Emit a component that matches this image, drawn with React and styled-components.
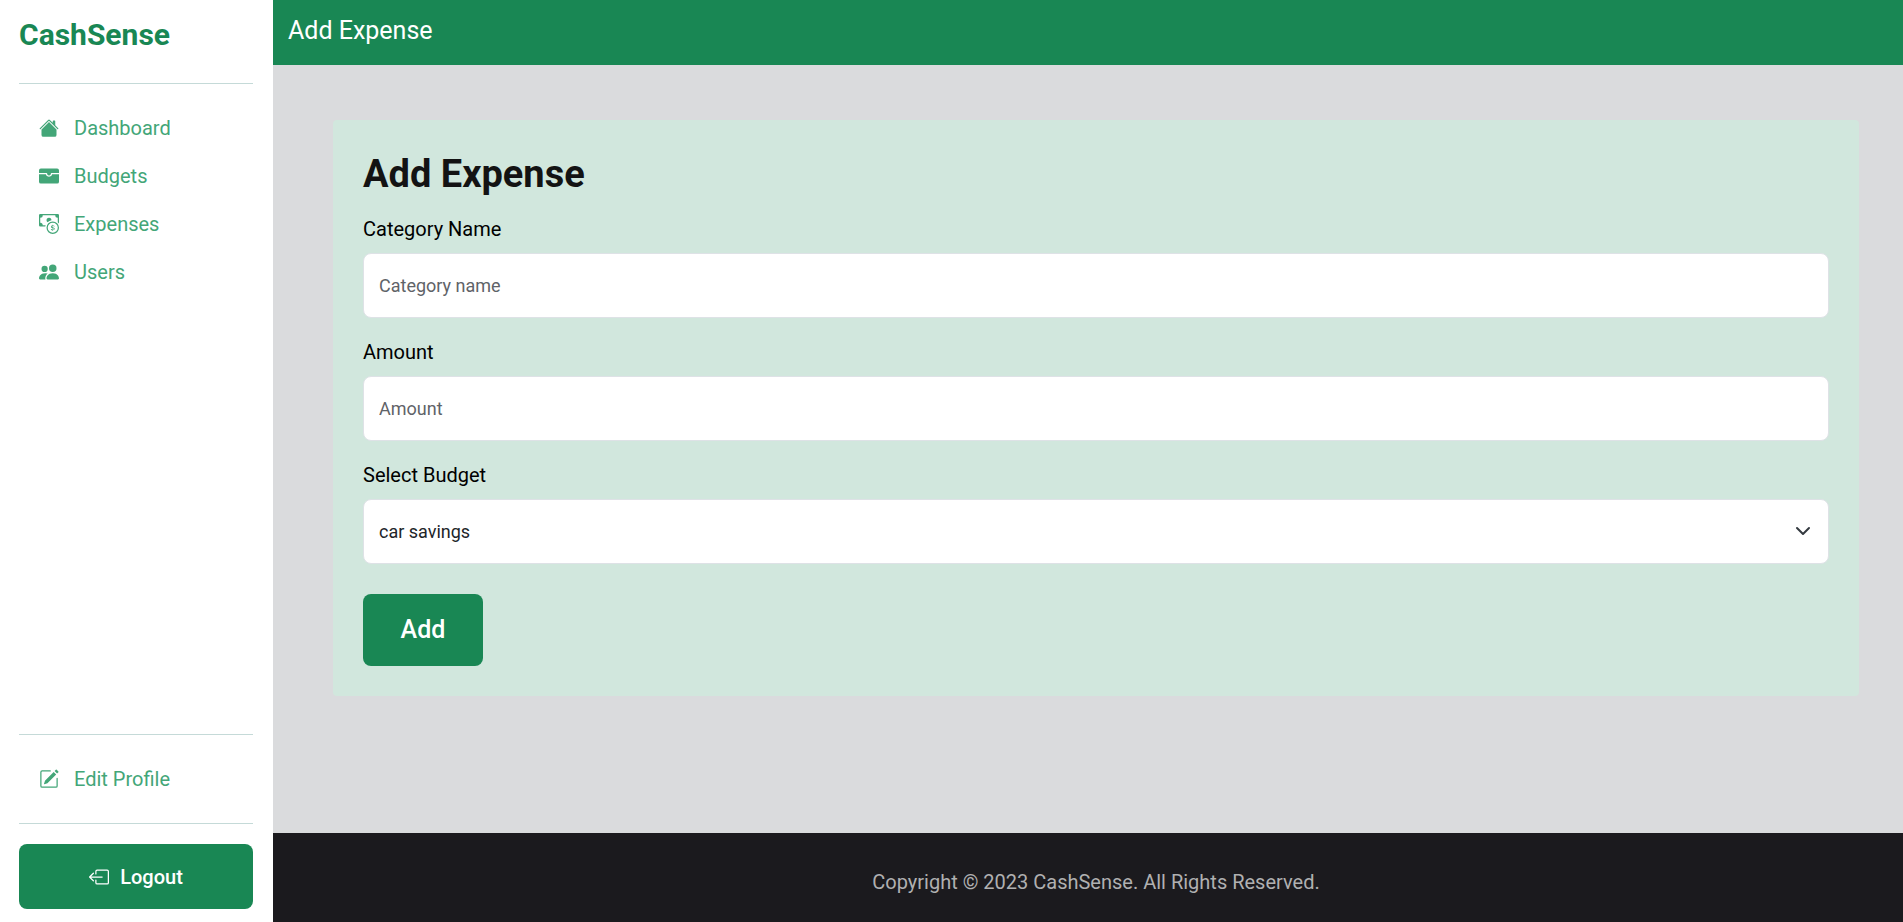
import React from "react";
import styled, { createGlobalStyle } from "styled-components";
import {
  BsHouseFill,
  BsWalletFill,
  BsCashCoin,
  BsPeopleFill,
  BsPencilSquare,
  BsBoxArrowLeft,
} from "react-icons/bs";

const GlobalStyle = createGlobalStyle`
  *, *::before, *::after { box-sizing: border-box; }
  body {
    margin: 0;
    background: #dadbdd;
    color: #131313;
    font-family: Roboto, "Liberation Sans", sans-serif;
    font-size: 20px;
    line-height: 30px;
  }
  button, input, select { font: inherit; }
`;

const Layout = styled.div`
  display: flex;
  min-height: 100vh;
`;

const Sidebar = styled.aside`
  display: flex;
  flex-direction: column;
  flex: 0 0 273px;
  padding: 17px 20px 13px 19px;
  background: #fff;
`;

const Brand = styled.a`
  color: #198754;
  font-size: 30px;
  font-weight: 700;
  line-height: 36px;
  text-decoration: none;
`;

const Divider = styled.hr`
  width: 100%;
  margin: 0;
  border: 0;
  border-top: 1px solid #c5dad8;
`;

const BrandDivider = styled(Divider)`
  margin-top: 30px;
`;

const NavList = styled.ul`
  flex: ${(p) => (p.$grow ? "1 0 auto" : "0 0 auto")};
  margin: 0;
  padding: 20px;
  list-style: none;
`;

const NavLink = styled.a`
  display: flex;
  align-items: center;
  gap: 15px;
  height: 48px;
  color: #43a678;
  text-decoration: none;
`;

const LogoutButton = styled.button`
  display: flex;
  align-items: center;
  justify-content: center;
  gap: 11px;
  width: 100%;
  height: 65px;
  margin-top: 20px;
  border: 0;
  border-radius: 8px;
  background: #198754;
  color: #fff;
  font-weight: 500;
`;

const Content = styled.div`
  display: flex;
  flex: 1;
  flex-direction: column;
  min-width: 0;
`;

const TopBar = styled.header`
  height: 65px;
  padding: 12px 15px;
  background: #198754;
  color: #fff;
  font-size: 25px;
  line-height: 38px;
`;

const Main = styled.main`
  flex: 1;
  padding: 55px 44px 55px 60px;
`;

const Card = styled.form`
  padding: 30px;
  border-radius: 4px;
  background: #d1e7dd;
`;

const Title = styled.h1`
  margin: 0 0 16px;
  font-size: 38px;
  font-weight: 700;
  line-height: 48px;
`;

const Field = styled.div`
  margin-bottom: 19px;
`;

const Label = styled.label`
  display: block;
  margin-bottom: 9px;
  color: #000;
`;

const Control = styled.input`
  display: block;
  width: 100%;
  height: 65px;
  padding: 0 15px;
  border: 1px solid #dee2e6;
  border-radius: 8px;
  background: #fff;
  color: #212529;
  font-size: 18px;
  appearance: none;

  &::placeholder {
    color: #5f6368;
    opacity: 1;
  }
`;

const SelectWrap = styled.div`
  position: relative;
`;

const SelectArrow = styled.svg`
  position: absolute;
  top: 24px;
  right: 18px;
  width: 16px;
  height: 16px;
  pointer-events: none;
  fill: none;
  stroke: #343a40;
  stroke-width: 2;
  stroke-linecap: round;
  stroke-linejoin: round;
`;

const AddButton = styled.button`
  display: block;
  width: 120px;
  height: 72px;
  margin-top: 30px;
  border: 0;
  border-radius: 8px;
  background: #198754;
  color: #fff;
  font-size: 25px;
  font-weight: 500;
`;

const Footer = styled.footer`
  padding: 34px 44px 25px 60px;
  background: #1b1a1e;
  color: #b0b0b1;
  text-align: center;
`;

const links = [
  { label: "Dashboard", Icon: BsHouseFill },
  { label: "Budgets", Icon: BsWalletFill },
  { label: "Expenses", Icon: BsCashCoin },
  { label: "Users", Icon: BsPeopleFill },
];

export default function App() {
  return (
    <>
      <GlobalStyle />
      <Layout>
        <Sidebar>
          <Brand href="#">CashSense</Brand>
          <BrandDivider />
          <NavList $grow>
            {links.map(({ label, Icon }) => (
              <li key={label}>
                <NavLink href="#">
                  <Icon size={20} aria-hidden="true" />
                  {label}
                </NavLink>
              </li>
            ))}
          </NavList>
          <Divider />
          <NavList>
            <li>
              <NavLink href="#">
                <BsPencilSquare size={20} aria-hidden="true" />
                Edit Profile
              </NavLink>
            </li>
          </NavList>
          <Divider />
          <LogoutButton type="button">
            <BsBoxArrowLeft size={20} aria-hidden="true" />
            Logout
          </LogoutButton>
        </Sidebar>
        <Content>
          <TopBar>Add Expense</TopBar>
          <Main>
            <Card onSubmit={(e) => e.preventDefault()}>
              <Title>Add Expense</Title>
              <Field>
                <Label htmlFor="category">Category Name</Label>
                <Control id="category" type="text" placeholder="Category name" />
              </Field>
              <Field>
                <Label htmlFor="amount">Amount</Label>
                <Control id="amount" type="text" inputMode="decimal" placeholder="Amount" />
              </Field>
              <Field>
                <Label htmlFor="budget">Select Budget</Label>
                <SelectWrap>
                  <Control as="select" id="budget" defaultValue="car savings">
                    <option>car savings</option>
                  </Control>
                  <SelectArrow viewBox="0 0 16 16" aria-hidden="true">
                    <path d="m2 5 6 6 6-6" />
                  </SelectArrow>
                </SelectWrap>
              </Field>
              <AddButton type="submit">Add</AddButton>
            </Card>
          </Main>
          <Footer>Copyright © 2023 CashSense. All Rights Reserved.</Footer>
        </Content>
      </Layout>
    </>
  );
}
